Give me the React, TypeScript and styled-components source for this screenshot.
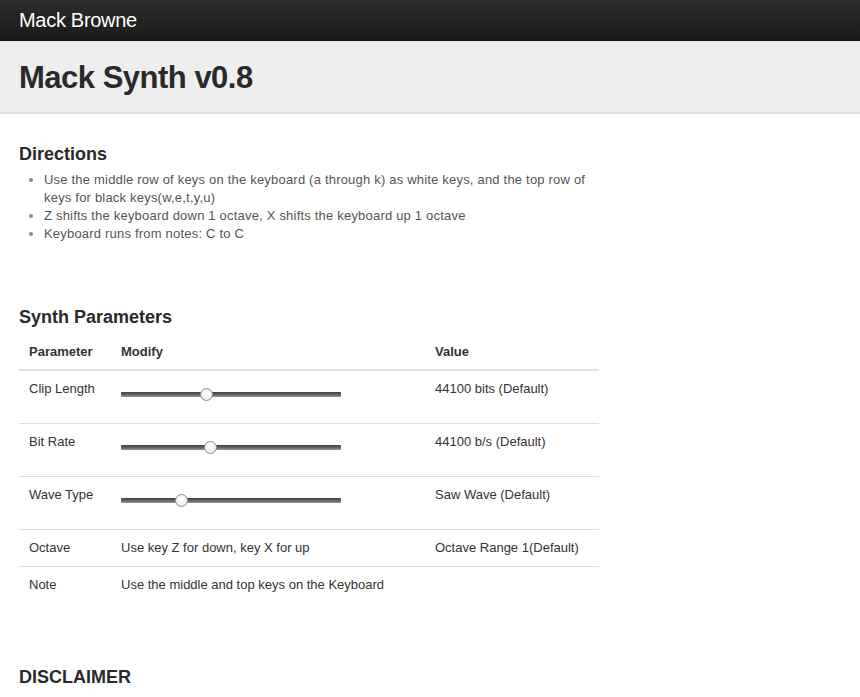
import styled, { createGlobalStyle } from "styled-components";

const GlobalStyle = createGlobalStyle`
  html, body {
    margin: 0;
    padding: 0;
    background: #fff;
    overflow: hidden;
  }
  body {
    font-family: "Liberation Sans", Arial, sans-serif;
    font-size: 13px;
    line-height: 18px;
    color: #333;
  }
`;

const Navbar = styled.header`
  height: 40px;
  display: flex;
  align-items: center;
  padding: 0 19px;
  background: linear-gradient(to bottom, #2c2c2c, #1a1a1a);
  border-bottom: 1px solid #111;
  box-shadow: 0 1px 3px rgba(0, 0, 0, 0.25);
`;

const Brand = styled.span`
  font-size: 20px;
  color: #fff;
  letter-spacing: -0.3px;
`;

const Hero = styled.section`
  background: #eeeeee;
  border-top: 1px solid #e4e4e4;
  border-bottom: 2px solid #dedede;
  padding: 18px 19px 16px;
`;

const Title = styled.h1`
  margin: 0;
  font-size: 31px;
  line-height: 36px;
  font-weight: 700;
  color: #2a2a2a;
  letter-spacing: -0.5px;
`;

const Content = styled.main`
  padding: 0 19px;
`;

const Heading = styled.h3<{ $top: number }>`
  margin: ${(p) => p.$top}px 0 6px;
  font-size: 18px;
  line-height: 22px;
  font-weight: 700;
  color: #2a2a2a;
`;

const List = styled.ul`
  margin: 0;
  padding-left: 25px;
  width: 555px;
  color: #555;
  font-size: 13px;
  letter-spacing: 0.2px;
  line-height: 18px;

  li::marker {
    color: #888;
  }
`;

const Table = styled.table`
  width: 580px;
  margin-top: 7px;
  border-collapse: collapse;
  font-size: 13px;
  color: #333;
`;

const Th = styled.th<{ $w?: number }>`
  text-align: left;
  font-weight: 700;
  padding: 8px 10px 8px;
  line-height: 18px;
  width: ${(p) => (p.$w ? `${p.$w}px` : "auto")};
  border-bottom: 2px solid #e2e2e2;
`;

const Td = styled.td`
  padding: 9px 10px 9px;
  line-height: 18px;
  vertical-align: top;
  border-top: 1px solid #dddddd;
`;

const SliderCell = styled.div`
  height: 34px;
  box-sizing: border-box;
  display: flex;
  align-items: flex-start;
  padding-top: 7px;
`;

const Range = styled.input.attrs({ type: "range", min: 0, max: 100 })`
  -webkit-appearance: none;
  appearance: none;
  width: 220px;
  height: 14px;
  margin: 0;
  background: transparent;

  &::-webkit-slider-runnable-track {
    height: 5px;
    background: linear-gradient(to bottom, #3e3e3e, #6a6a6a 60%, #9a9a9a);
    border-radius: 1px;
  }

  &::-webkit-slider-thumb {
    -webkit-appearance: none;
    width: 13px;
    height: 13px;
    margin-top: -4px;
    border-radius: 50%;
    background: radial-gradient(circle at 50% 40%, #ffffff, #e6e6e6);
    border: 1px solid #8a8a8a;
  }
`;

function Slider({ value }: { value: number }) {
  return (
    <SliderCell>
      <Range defaultValue={value} />
    </SliderCell>
  );
}

const FaintList = styled(List)`
  color: #aaa;
  width: auto;
`;

export default function App() {
  return (
    <>
      <GlobalStyle />
      <Navbar>
        <Brand>Mack Browne</Brand>
      </Navbar>
      <Hero>
        <Title>Mack Synth v0.8</Title>
      </Hero>
      <Content>
        <Heading $top={29}>Directions</Heading>
        <List>
          <li>
            Use the middle row of keys on the keyboard (a through k) as white
            keys, and the top row of keys for black keys(w,e,t,y,u)
          </li>
          <li>Z shifts the keyboard down 1 octave, X shifts the keyboard up 1 octave</li>
          <li>Keyboard runs from notes: C to C</li>
        </List>

        <Heading $top={63}>Synth Parameters</Heading>
        <Table>
          <thead>
            <tr>
              <Th $w={72}>Parameter</Th>
              <Th $w={294}>Modify</Th>
              <Th>Value</Th>
            </tr>
          </thead>
          <tbody>
            <tr>
              <Td>Clip Length</Td>
              <Td>
                <Slider value={38} />
              </Td>
              <Td>44100 bits (Default)</Td>
            </tr>
            <tr>
              <Td>Bit Rate</Td>
              <Td>
                <Slider value={40} />
              </Td>
              <Td>44100 b/s (Default)</Td>
            </tr>
            <tr>
              <Td>Wave Type</Td>
              <Td>
                <Slider value={26} />
              </Td>
              <Td>Saw Wave (Default)</Td>
            </tr>
            <tr>
              <Td>Octave</Td>
              <Td>Use key Z for down, key X for up</Td>
              <Td>Octave Range 1(Default)</Td>
            </tr>
            <tr>
              <Td>Note</Td>
              <Td>Use the middle and top keys on the Keyboard</Td>
              <Td></Td>
            </tr>
          </tbody>
        </Table>

        <Heading $top={63}>DISCLAIMER</Heading>
        <FaintList>
          <li>This synth is a personal experiment and may not work in every browser.</li>
        </FaintList>
      </Content>
    </>
  );
}
